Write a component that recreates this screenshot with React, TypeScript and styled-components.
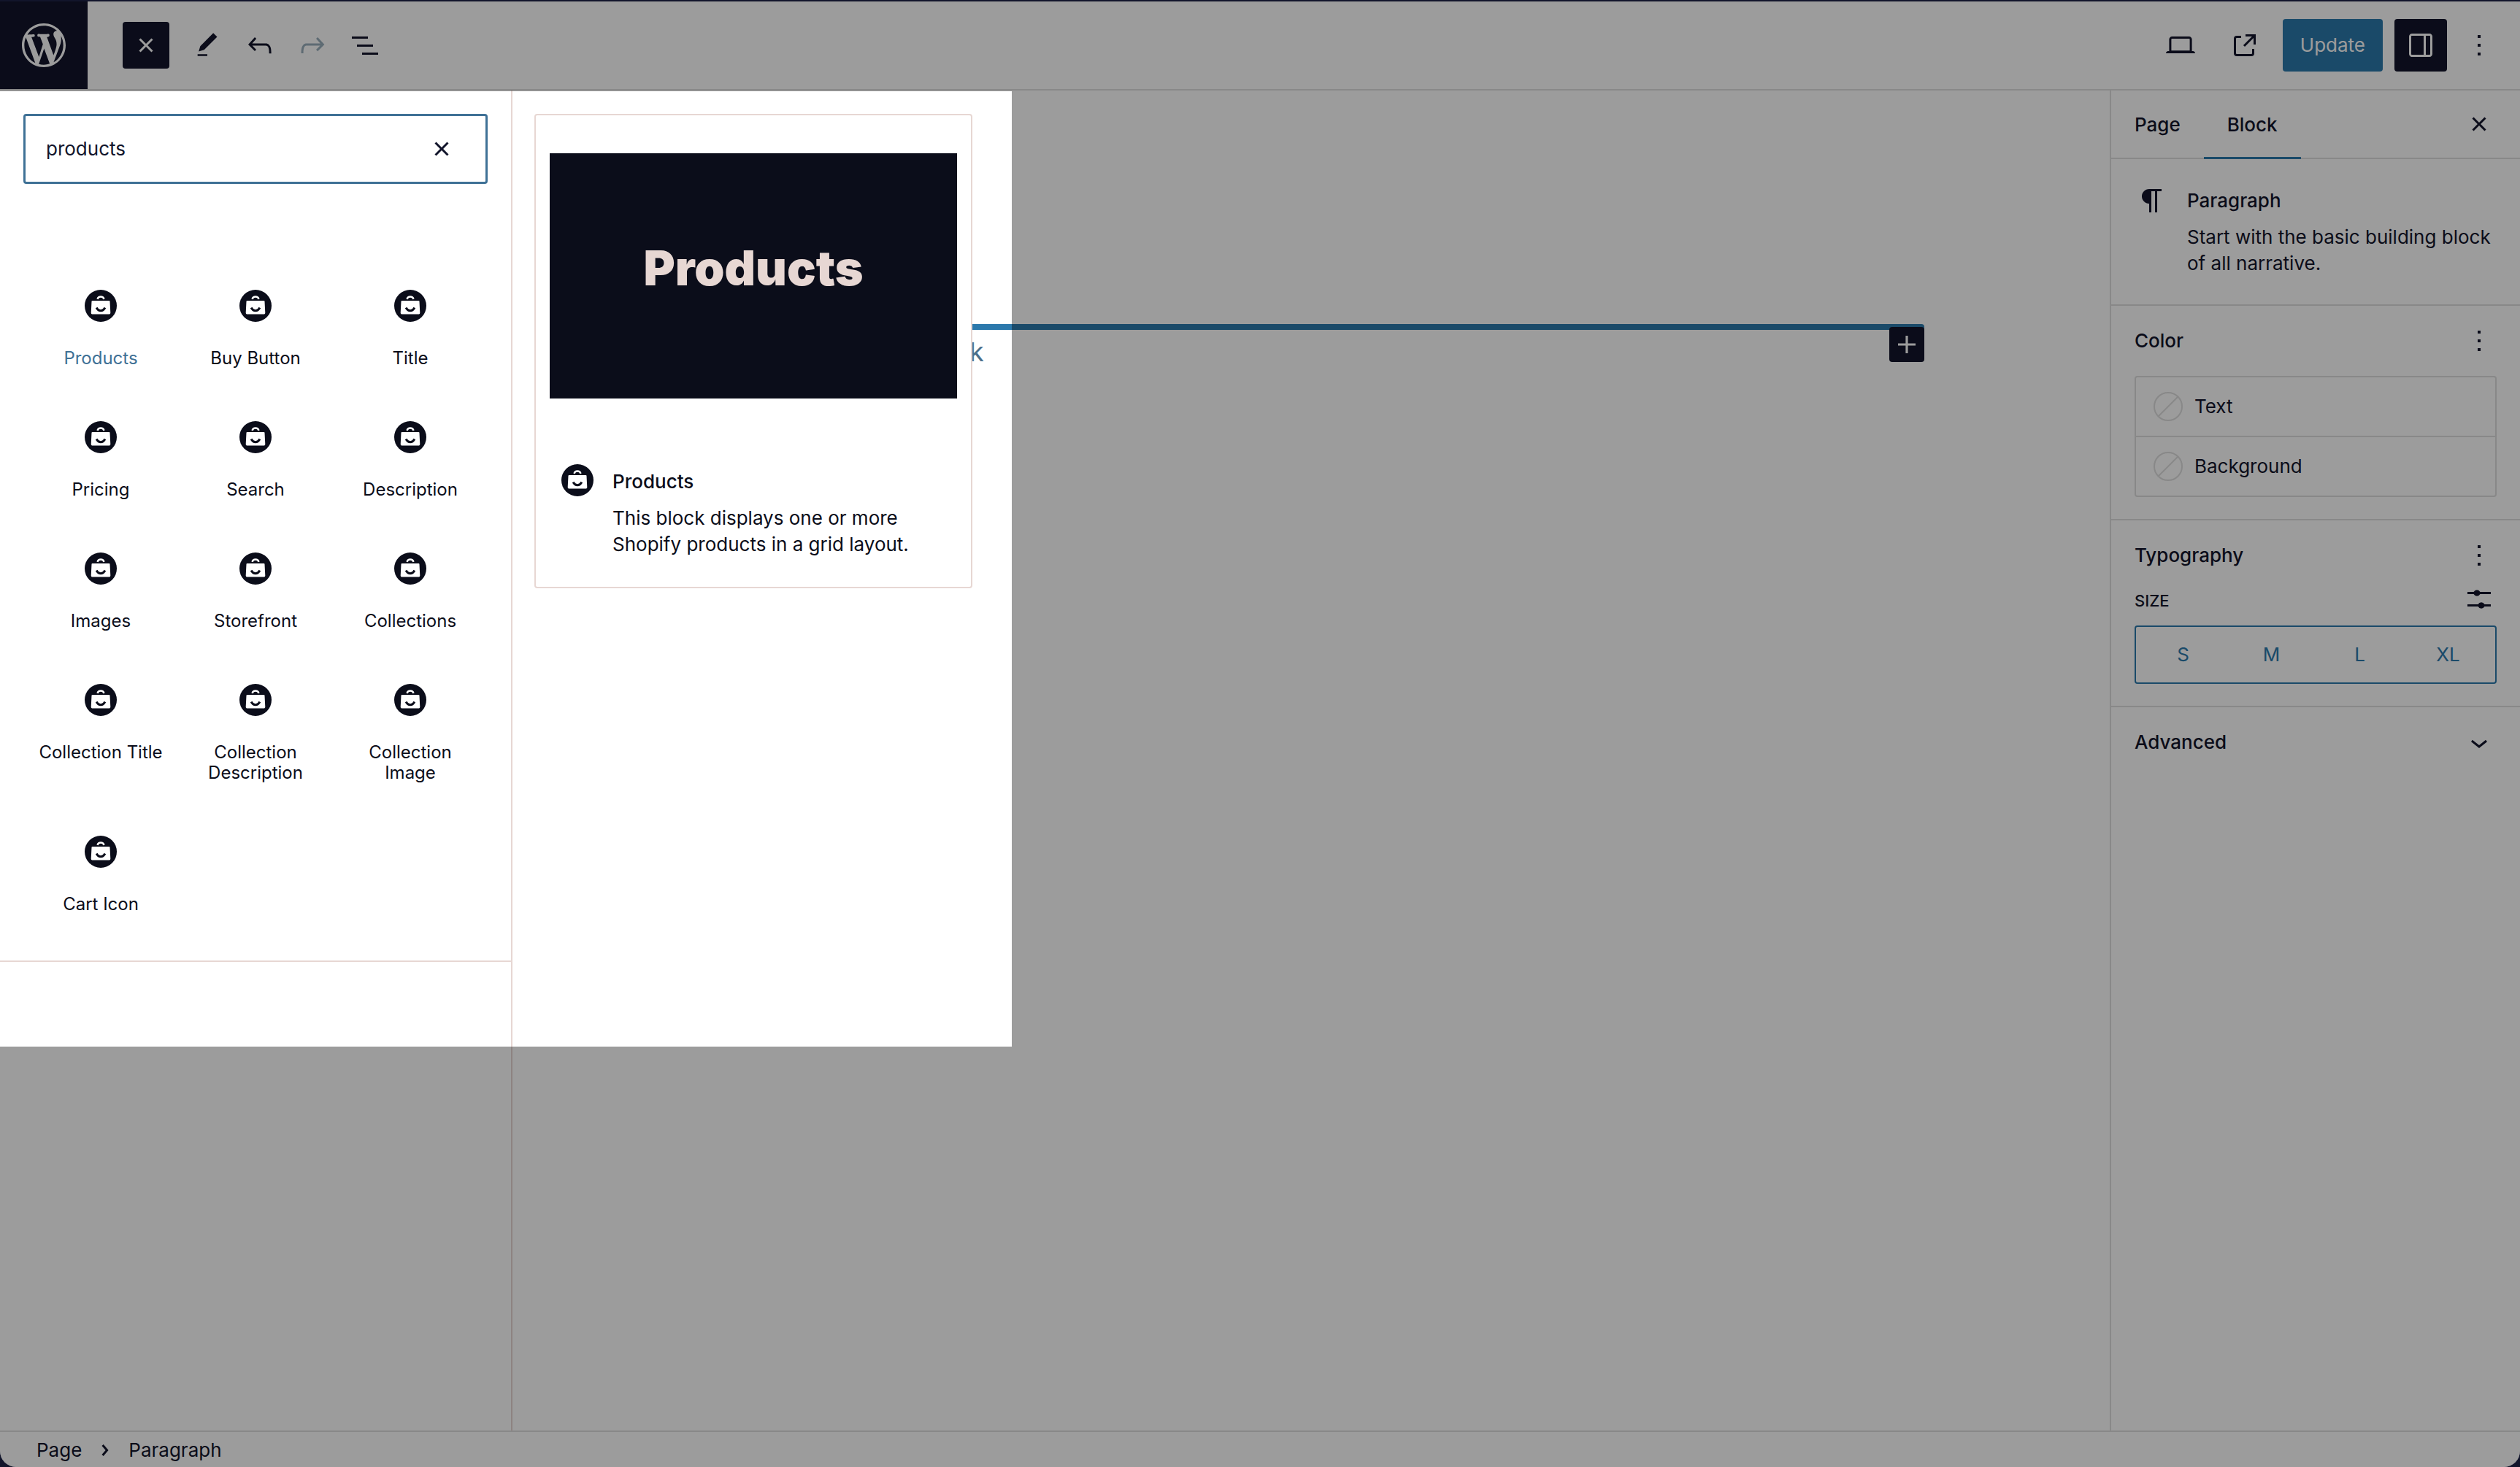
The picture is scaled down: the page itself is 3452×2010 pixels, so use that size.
import React from 'react';
import styled, { createGlobalStyle } from 'styled-components';

const ink = '#12152b';
const blue = '#2c79ac';
const line = '#dedede';
const blush = '#e7d7d3';

const GlobalStyle = createGlobalStyle`
  *, *::before, *::after { box-sizing: border-box; }
  html, body, #root { height: 100%; }
  body {
    margin: 0;
    background: ${ink};
    font-family: Inter, "Liberation Sans", sans-serif;
    font-size: 26px;
    line-height: 36px;
    color: ${ink};
  }
  h1, h2, h3, p, ul, ol { margin: 0; padding: 0; }
  ul, ol { list-style: none; }
  button, input { font: inherit; color: inherit; }
`;

const Page = styled.div`
  position: relative;
  display: flex;
  flex-direction: column;
  min-height: 100vh;
  overflow: hidden;
  background: #fff;
  border-top: 2px solid ${ink};
  border-radius: 0 0 22px 22px;
`;

const Header = styled.header`
  display: flex;
  align-items: center;
  height: 122px;
  border-bottom: 2px solid ${line};
`;

const Logo = styled.a`
  display: flex;
  align-items: center;
  justify-content: center;
  align-self: stretch;
  width: 120px;
  background: ${ink};
  color: #fff;
`;

const Tools = styled.div`
  display: flex;
  align-items: center;
  gap: 20px;
  margin-left: 48px;
`;

const ToolGroup = styled.div`
  display: flex;
  align-items: center;
  gap: 8px;
`;

const Actions = styled.div`
  display: flex;
  align-items: center;
  gap: 16px;
  margin-left: auto;
  margin-right: 28px;
`;

const IconButton = styled.button<{ $size?: number; $filled?: boolean; $faded?: boolean }>`
  display: flex;
  align-items: center;
  justify-content: center;
  flex: none;
  width: ${p => p.$size ?? 64}px;
  height: ${p => p.$size ?? 64}px;
  padding: 0;
  border: 0;
  border-radius: 4px;
  background: ${p => (p.$filled ? ink : 'transparent')};
  color: ${p => (p.$filled ? '#fff' : p.$faded ? '#9aafbd' : ink)};
`;

const UpdateButton = styled.button`
  height: 72px;
  padding: 0 24px;
  border: 0;
  border-radius: 4px;
  background: ${blue};
  color: #fff;
`;

const Body = styled.div`
  display: flex;
  flex: 1;
`;

const Inserter = styled.aside`
  flex: none;
  width: 702px;
  border-right: 2px solid ${blush};
`;

const SearchField = styled.label`
  display: flex;
  align-items: center;
  height: 96px;
  margin: 32px 32px 0;
  padding: 0 32px 0 28px;
  border: 3px solid #3f7196;
  border-radius: 4px;
`;

const SearchInput = styled.input`
  flex: 1;
  min-width: 0;
  padding: 0;
  border: 0;
  outline: 0;
  background: transparent;
`;

const BlockGrid = styled.ul`
  display: grid;
  grid-template-columns: repeat(3, 1fr);
  row-gap: 72px;
  padding: 145px 32px 63px;
  border-bottom: 2px solid ${blush};
`;

const BlockTile = styled.button<{ $active?: boolean }>`
  display: flex;
  flex-direction: column;
  align-items: center;
  gap: 36px;
  width: 100%;
  padding: 0 16px;
  border: 0;
  background: transparent;
  font-size: 24px;
  line-height: 28px;
  color: ${p => (p.$active ? '#3f7196' : '#0b0d1a')};
`;

const Canvas = styled.main`
  display: flex;
  align-items: flex-start;
  flex: 1;
  min-width: 0;
  padding: 32px 254px 0 30px;
`;

const PreviewCard = styled.section`
  position: relative;
  z-index: 1;
  flex: none;
  width: 600px;
  padding: 52px 19px 40px;
  border: 2px solid ${blush};
  border-radius: 4px;
  background: #fff;
  color: #0b0d1a;
`;

const PreviewImage = styled.div`
  display: flex;
  align-items: center;
  justify-content: center;
  height: 336px;
  padding-bottom: 22px;
  background: #0b0d1a;
  color: ${blush};
  font-size: 66px;
  font-weight: 900;
`;

const Summary = styled.div<{ $inset: number; $gap: number }>`
  display: flex;
  gap: ${p => p.$gap}px;
  padding-left: ${p => p.$inset}px;
  svg { flex: none; }
`;

const PreviewSummary = styled(Summary)`
  margin-top: 90px;
`;

const SummaryText = styled.div`
  display: flex;
  flex-direction: column;
  gap: 14px;
  padding-top: 6px;
`;

const Title = styled.h2`
  font-size: 26px;
  line-height: 36px;
  font-weight: 500;
`;

const InsertionPoint = styled.div`
  position: relative;
  flex: 1;
  min-width: 0;
  margin-top: 288px;
  padding-top: 10px;
  border-top: 8px solid ${blue};
  border-top-right-radius: 4px;
  font-size: 36px;
  line-height: 40px;
  color: #4b708b;
`;

const Prompt = styled.p`
  margin-left: -4px;
`;

const AddButton = styled(IconButton)`
  position: absolute;
  top: -4px;
  right: 0;
`;

const Sidebar = styled.aside`
  flex: none;
  width: 562px;
  border-left: 2px solid ${line};
`;

const Tabs = styled.div`
  display: flex;
  align-items: stretch;
  height: 94px;
  padding-right: 24px;
  border-bottom: 2px solid ${line};
`;

const Tab = styled.button<{ $active?: boolean }>`
  margin-bottom: -2px;
  padding: 0 32px;
  border: 0;
  background: ${p => (p.$active ? `linear-gradient(${blue}, ${blue}) bottom / 100% 3px no-repeat` : 'transparent')};
  font-weight: 500;
`;

const TabClose = styled(IconButton)`
  align-self: center;
  margin-left: auto;
`;

const Panel = styled.section<{ $pad: string }>`
  padding: ${p => p.$pad};
  border-bottom: 2px solid ${line};
  &:last-child { border-bottom: 0; }
`;

const PanelHead = styled.div`
  display: flex;
  align-items: center;
  justify-content: space-between;
  height: 64px;
`;

const ColorList = styled.ul`
  margin-top: 16px;
  border: 2px solid ${line};
  border-radius: 4px;
  li + li { border-top: 2px solid ${line}; }
`;

const ColorRow = styled.button`
  display: flex;
  align-items: center;
  gap: 16px;
  width: 100%;
  height: 80px;
  padding: 0 24px;
  border: 0;
  background: transparent;
`;

const SizeHead = styled.div`
  display: flex;
  align-items: center;
  justify-content: space-between;
  height: 48px;
  margin-top: 4px;
`;

const SizeLabel = styled.h3`
  padding-top: 4px;
  font-size: 22px;
  line-height: 28px;
  font-weight: 500;
  text-transform: uppercase;
`;

const SizeGroup = styled.div`
  display: grid;
  grid-template-columns: repeat(4, 1fr);
  height: 80px;
  margin-top: 12px;
  padding: 0 4px;
  border: 2px solid ${blue};
  border-radius: 4px;
`;

const SizeOption = styled.button`
  padding: 0;
  border: 0;
  background: transparent;
  color: ${blue};
`;

const Footer = styled.footer`
  height: 50px;
  border-top: 2px solid ${line};
`;

const Crumbs = styled.ol`
  display: flex;
  align-items: center;
  gap: 8px;
  height: 50px;
  padding-left: 50px;
  li { display: flex; align-items: center; }
`;

const Crumb = styled.a`
  color: inherit;
  text-decoration: none;
`;

const Spotlight = styled.div`
  position: absolute;
  z-index: 2;
  top: 123px;
  left: 0;
  width: 1386px;
  height: 1309px;
  box-shadow: 0 0 0 4000px rgba(0, 0, 0, 0.388);
  pointer-events: none;
`;

const paths = {
  close: 'M12 13.06l3.712 3.713 1.061-1.06L13.061 12l3.712-3.712-1.06-1.06L12 10.938 8.288 7.227l-1.061 1.06L10.939 12l-3.712 3.712 1.06 1.061L12 13.061z',
  edit: 'M20.1 5.1L16.9 2 6.2 12.7l-1.3 4.4 4.5-1.3L20.1 5.1zM4 20.8h8v-1.5H4v1.5z',
  undo: 'M18.3 11.7c-.6-.6-1.4-.9-2.3-.9H6.7l2.9-3.3-1.1-1-4.5 5L8.5 16l1-1-2.7-2.7H16c.5 0 .9.2 1.3.5 1 1 1 3.4 1 4.5v.3h1.5v-.2c0-1.5 0-4.3-1.5-5.7z',
  redo: 'M15.6 6.5l-1.1 1 2.9 3.3H8c-.9 0-1.7.3-2.3.9-1.4 1.5-1.4 4.2-1.4 5.6v.2h1.5v-.3c0-1.1 0-3.5 1-4.5.3-.3.7-.5 1.3-.5h9.2L14.5 15l1.1 1.1 4.6-4.6-4.6-5z',
  list: 'M3 6h11v1.5H3V6Zm3.5 5.5h11V13h-11v-1.5ZM21 17H10v1.5h11V17Z',
  laptop: 'M20.5 16h-.7V8c0-1.1-.9-2-2-2H6.2c-1.1 0-2 .9-2 2v8h-.7c-.8 0-1.5.7-1.5 1.5h20c0-.8-.7-1.5-1.5-1.5zM5.7 8c0-.3.2-.5.5-.5h11.6c.3 0 .5.2.5.5v7.6H5.7V8z',
  external: 'M19.5 4.5h-7V6h4.44l-5.97 5.97 1.06 1.06L18 7.06v4.44h1.5v-7Zm-13 1a2 2 0 0 0-2 2v10a2 2 0 0 0 2 2h10a2 2 0 0 0 2-2v-3H17v3a.5.5 0 0 1-.5.5h-10a.5.5 0 0 1-.5-.5v-10a.5.5 0 0 1 .5-.5h3V5.5h-3Z',
  drawer: 'M18 4H6c-1.1 0-2 .9-2 2v12c0 1.1.9 2 2 2h12c1.1 0 2-.9 2-2V6c0-1.1-.9-2-2-2zm-4 14.5H6c-.3 0-.5-.2-.5-.5V6c0-.3.2-.5.5-.5h8v13zm4.5-.5c0 .3-.2.5-.5.5h-2.500v-13H18c.3 0 .5.2.5.5v12z',
  more: 'M13 19h-2v-2h2v2zm0-6h-2v-2h2v2zm0-6h-2V5h2v2z',
  pilcrow: 'm9.996 14v-.225l.004 0v6.225h1.5v-14.5h2.5v14.5h1.5v-14.5h3v-1.5h-8.504c-2.761 0-5 2.239-5 5 0 2.761 2.239 5 5 5z',
  plus: 'M11.2 6h1.6v5.2H18v1.6h-5.2V18h-1.6v-5.2H6v-1.6h5.2z',
  sliders: 'M4 7h4.3a2.500 2.500 0 0 1 4.4 0H20v1.5h-7.3a2.500 2.500 0 0 1-4.4 0H4zM4 15.5h7.3a2.500 2.500 0 0 1 4.4 0H20V17h-4.3a2.500 2.500 0 0 1-4.4 0H4z',
  down: 'M17.5 11.6L12 16l-5.5-4.4.9-1.2L12 14l4.5-3.6 1 1.2z',
  right: 'M10.862 8.04L14.28 12.029L10.862 16.017L9.723 15.04L12.305 12.029L9.723 9.017L10.862 8.04Z',
};

const Icon = ({ name, size = 48 }: { name: keyof typeof paths; size?: number }) => (
  <svg width={size} height={size} viewBox="0 0 24 24" fill="currentColor" aria-hidden="true">
    <path d={paths[name]} />
  </svg>
);

const WordPressMark = () => (
  <svg width="72" height="72" viewBox="-2 -2 24 24" fill="currentColor" aria-hidden="true">
    <path d="M20 10c0-5.51-4.49-10-10-10C4.48 0 0 4.49 0 10c0 5.52 4.48 10 10 10 5.51 0 10-4.48 10-10zM7.78 15.37L4.37 6.22c.55-.02 1.17-.08 1.17-.08.5-.06.44-1.13-.06-1.11 0 0-1.45.11-2.37.11-.18 0-.37 0-.58-.01C4.12 2.69 6.87 1.11 10 1.11c2.33 0 4.45.87 6.05 2.34-.68-.11-1.65.39-1.65 1.58 0 .74.45 1.36.9 2.1.35.61.55 1.36.55 2.46 0 1.49-1.4 5-1.4 5l-3.03-8.37c.54-.02.82-.17.82-.17.5-.05.44-1.25-.06-1.22 0 0-1.44.12-2.38.12-.87 0-2.33-.12-2.33-.12-.5-.03-.56 1.2-.06 1.22l.92.08 1.26 3.41zM17.41 10c.24-.64.74-1.87.43-4.25.7 1.29 1.05 2.71 1.05 4.25 0 3.29-1.73 6.24-4.4 7.78.97-2.59 1.94-5.2 2.92-7.78zM6.1 18.09C3.12 16.65 1.11 13.53 1.11 10c0-1.3.23-2.48.72-3.59C3.25 10.3 4.67 14.2 6.1 18.09zm4.03-6.63l2.58 6.98c-.86.29-1.76.45-2.71.45-.79 0-1.57-.11-2.29-.33.81-2.38 1.62-4.74 2.42-7.1z" />
  </svg>
);

const BagIcon = () => (
  <svg width="44" height="44" viewBox="0 0 44 44" fill="none" aria-hidden="true">
    <circle cx="22" cy="22" r="22" fill="#0b0d1a" />
    <path d="M17.500 12.800a4.700 4.700 0 0 1 9 0" stroke="#fff" strokeWidth="2.400" />
    <path d="M10.500 15h23q1 0 1 1l.8 15.800q0 1.700-1.500 1.700H10.200q-1.500 0-1.500-1.700L9.500 16q0-1 1-1z" fill="#fff" />
    <path d="M16.200 24.500c2.600 5.600 9 5.600 11.600 0" stroke="#0b0d1a" strokeWidth="3" />
  </svg>
);

const EmptySwatch = () => (
  <svg width="40" height="40" viewBox="0 0 40 40" fill="none" stroke={line} strokeWidth="2" aria-hidden="true">
    <circle cx="20" cy="20" r="19" />
    <path d="M6.500 33.500L33.500 6.500" />
  </svg>
);

const blocks = [
  'Products', 'Buy Button', 'Title',
  'Pricing', 'Search', 'Description',
  'Images', 'Storefront', 'Collections',
  'Collection Title', 'Collection Description', 'Collection Image',
  'Cart Icon',
];

export default function App() {
  return (
    <>
      <GlobalStyle />
      <Page>
        <Header>
          <Logo href="#" aria-label="View pages"><WordPressMark /></Logo>
          <Tools>
            <IconButton $filled aria-label="Close inserter"><Icon name="close" /></IconButton>
            <ToolGroup>
              <IconButton aria-label="Tools"><Icon name="edit" size={40} /></IconButton>
              <IconButton aria-label="Undo"><Icon name="undo" /></IconButton>
              <IconButton $faded aria-label="Redo"><Icon name="redo" /></IconButton>
              <IconButton aria-label="List view"><Icon name="list" /></IconButton>
            </ToolGroup>
          </Tools>
          <Actions>
            <IconButton $size={72} aria-label="Preview"><Icon name="laptop" /></IconButton>
            <IconButton $size={72} aria-label="View page"><Icon name="external" /></IconButton>
            <UpdateButton>Update</UpdateButton>
            <IconButton $size={72} $filled aria-label="Settings"><Icon name="drawer" /></IconButton>
            <IconButton $size={56} aria-label="Options"><Icon name="more" /></IconButton>
          </Actions>
        </Header>

        <Body>
          <Inserter>
            <SearchField>
              <SearchInput type="text" defaultValue="products" aria-label="Search for blocks" />
              <IconButton $size={56} aria-label="Reset search"><Icon name="close" /></IconButton>
            </SearchField>
            <BlockGrid>
              {blocks.map((name, i) => (
                <li key={name}>
                  <BlockTile $active={i === 0}>
                    <BagIcon />
                    <span>{name}</span>
                  </BlockTile>
                </li>
              ))}
            </BlockGrid>
          </Inserter>

          <Canvas>
            <PreviewCard>
              <PreviewImage>Products</PreviewImage>
              <PreviewSummary $inset={16} $gap={26}>
                <BagIcon />
                <SummaryText>
                  <Title>Products</Title>
                  <p>This block displays one or more Shopify products in a grid layout.</p>
                </SummaryText>
              </PreviewSummary>
            </PreviewCard>
            <InsertionPoint>
              <Prompt>k</Prompt>
              <AddButton $size={48} $filled aria-label="Add block"><Icon name="plus" /></AddButton>
            </InsertionPoint>
          </Canvas>

          <Sidebar>
            <Tabs>
              <Tab>Page</Tab>
              <Tab $active>Block</Tab>
              <TabClose aria-label="Close settings"><Icon name="close" /></TabClose>
            </Tabs>
            <Panel $pad="33px 32px 38px">
              <Summary $inset={0} $gap={24}>
                <Icon name="pilcrow" />
                <SummaryText>
                  <Title>Paragraph</Title>
                  <p>Start with the basic building block of all narrative.</p>
                </SummaryText>
              </Summary>
            </Panel>
            <Panel $pad="16px 32px 30px">
              <PanelHead>
                <Title>Color</Title>
                <IconButton $size={48} aria-label="Color options"><Icon name="more" /></IconButton>
              </PanelHead>
              <ColorList>
                <li><ColorRow><EmptySwatch />Text</ColorRow></li>
                <li><ColorRow><EmptySwatch />Background</ColorRow></li>
              </ColorList>
            </Panel>
            <Panel $pad="16px 32px 30px">
              <PanelHead>
                <Title>Typography</Title>
                <IconButton $size={48} aria-label="Typography options"><Icon name="more" /></IconButton>
              </PanelHead>
              <SizeHead>
                <SizeLabel>Size</SizeLabel>
                <IconButton $size={48} aria-label="Set custom size"><Icon name="sliders" /></IconButton>
              </SizeHead>
              <SizeGroup>
                {['S', 'M', 'L', 'XL'].map(size => <SizeOption key={size}>{size}</SizeOption>)}
              </SizeGroup>
            </Panel>
            <Panel $pad="16px 32px">
              <PanelHead>
                <Title>Advanced</Title>
                <IconButton $size={48} aria-label="Expand advanced"><Icon name="down" /></IconButton>
              </PanelHead>
            </Panel>
          </Sidebar>
        </Body>

        <Footer>
          <Crumbs>
            <li><Crumb href="#">Page</Crumb></li>
            <li><Icon name="right" /></li>
            <li><Crumb href="#">Paragraph</Crumb></li>
          </Crumbs>
        </Footer>
        <Spotlight />
      </Page>
    </>
  );
}
